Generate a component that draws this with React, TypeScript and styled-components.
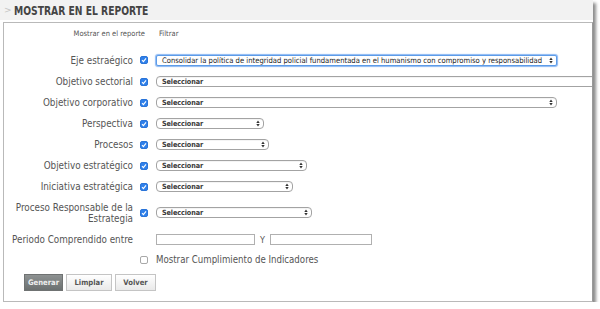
import styled, { createGlobalStyle } from 'styled-components';

const GlobalStyle = createGlobalStyle`
  html, body {
    margin: 0;
    padding: 0;
    background: #ffffff;
  }
  body {
    font-family: "DejaVu Sans Condensed", "DejaVu Sans", sans-serif;
    color: #555;
  }
`;

const Card = styled.div`
  width: 593px;
  height: 302px;
  box-shadow: 3px 3px 3px rgba(0, 0, 0, 0.45);
  background: #fff;
  display: flex;
  flex-direction: column;
  overflow: hidden;
`;

const Header = styled.div`
  height: 20px;
  background: #f2f2f2;
  display: flex;
  align-items: center;
  padding-left: 4px;
  gap: 2px;
  flex-shrink: 0;
`;

const Chevron = styled.span`
  color: #c4c4c4;
  font-family: "DejaVu Sans", sans-serif;
  font-size: 9px;
`;

const Title = styled.span`
  font-family: "DejaVu Sans Condensed", "DejaVu Sans", sans-serif;
  font-weight: bold;
  font-size: 12.5px;
  color: #444;
  display: inline-block;
  transform: scaleX(0.82);
  transform-origin: left center;
  white-space: nowrap;
`;

const Body = styled.div`
  flex: 1;
  margin: 2px 0 0 3px;
  border: 1px solid #b9b9b9;
  border-right-color: #999;
  overflow: hidden;
  display: flex;
  flex-direction: column;
`;

const Row = styled.div<{ $h?: number }>`
  display: flex;
  align-items: center;
  height: ${(p) => p.$h ?? 21}px;
  white-space: nowrap;
  flex-shrink: 0;
`;

const ColHeads = styled(Row)`
  height: 20px;
  font-size: 7.5px;
  color: #555;
  margin-bottom: 6px;
`;

const ColHeadShow = styled.span`
  width: 141px;
  text-align: right;
`;

const ColHeadFilter = styled.span`
  margin-left: 14px;
`;

const Label = styled.div`
  width: 129px;
  text-align: right;
  font-size: 9.8px;
  line-height: 11px;
  color: #555;
  flex-shrink: 0;
`;

const CheckSlot = styled.div`
  width: 8px;
  height: 8px;
  margin: 0 8px 0 7px;
  flex-shrink: 0;
  display: flex;
`;

const Box = styled.span<{ $on?: boolean }>`
  width: 8px;
  height: 8px;
  border-radius: 2px;
  box-sizing: border-box;
  background: ${(p) => (p.$on ? '#2f80ea' : '#fff')};
  border: 1px solid ${(p) => (p.$on ? '#2a74d8' : '#a8a8a8')};
  display: flex;
  align-items: center;
  justify-content: center;
`;

const SelectBox = styled.div<{ $w: number; $focus?: boolean }>`
  width: ${(p) => p.$w}px;
  height: 11px;
  box-sizing: border-box;
  border: 1px solid ${(p) => (p.$focus ? '#5d9ce8' : '#a3a3a3')};
  border-radius: ${(p) => (p.$focus ? '2px' : '4px')};
  box-shadow: ${(p) =>
    p.$focus ? '0 0 1px 1px rgba(110, 165, 240, 0.8)' : 'inset 0 1px 0 #f4f4f4'};
  background: #fff;
  display: flex;
  align-items: center;
  justify-content: space-between;
  padding: 0 3px 0 5px;
  flex-shrink: 0;
  color: #333;
  overflow: hidden;
`;

const SelectText = styled.span<{ $light?: boolean }>`
  font-size: ${(p) => (p.$light ? '7.6px' : '7.2px')};
  font-weight: ${(p) => (p.$light ? 'normal' : 'bold')};
  color: ${(p) => (p.$light ? '#222' : '#3a3a3a')};
  letter-spacing: ${(p) => (p.$light ? '0' : '-0.1px')};
`;

const TextInput = styled.div<{ $w: number }>`
  width: ${(p) => p.$w}px;
  height: 9px;
  border: 1px solid #b0b0b0;
  background: #fff;
  flex-shrink: 0;
`;

const AndSep = styled.span`
  font-size: 9px;
  color: #555;
  margin: 0 5px 0 5px;
`;

const PlainText = styled.span`
  font-size: 9.6px;
  color: #555;
`;

const Buttons = styled.div`
  display: flex;
  gap: 3px;
  padding-left: 20px;
  margin-top: 6px;
`;

const Button = styled.div<{ $primary?: boolean; $w: number }>`
  width: ${(p) => p.$w}px;
  height: 17px;
  box-sizing: border-box;
  display: flex;
  align-items: center;
  justify-content: center;
  font-size: 7.6px;
  font-weight: bold;
  border: 1px solid ${(p) => (p.$primary ? '#6f7272' : '#c4c4c4')};
  color: ${(p) => (p.$primary ? '#eeeeee' : '#555')};
  background: ${(p) =>
    p.$primary
      ? 'linear-gradient(#8e9292, #6b7070)'
      : 'linear-gradient(#ffffff, #e9e9e9)'};
`;

const Check = () => (
  <svg width="6" height="6" viewBox="0 0 6 6">
    <path d="M1 3.2 L2.4 4.6 L5 1.4" fill="none" stroke="#fff" strokeWidth="1.1" />
  </svg>
);

const Arrows = () => (
  <svg width="4" height="7" viewBox="0 0 4 7">
    <path d="M0.3 3 L2 0.6 L3.7 3 Z M0.3 4 L2 6.4 L3.7 4 Z" fill="#333" />
  </svg>
);

type Field = {
  label: string[];
  width: number;
  text?: string;
  focus?: boolean;
  arrows?: boolean;
  h?: number;
};

const fields: Field[] = [
  {
    label: ['Eje estraégico'],
    width: 401,
    focus: true,
    h: 22,
    text: 'Consolidar la política de integridad policial fundamentada en el humanismo con compromiso y responsabilidad',
  },
  { label: ['Objetivo sectorial'], width: 460, arrows: false },
  { label: ['Objetivo corporativo'], width: 401 },
  { label: ['Perspectiva'], width: 108 },
  { label: ['Procesos'], width: 113 },
  { label: ['Objetivo estratégico'], width: 151 },
  { label: ['Iniciativa estratégica'], width: 137 },
  { label: ['Proceso Responsable de la', 'Estrategia'], width: 156, h: 31 },
];

const App = () => (
  <>
    <GlobalStyle />
    <Card>
      <Header>
        <Chevron>&gt;</Chevron>
        <Title>MOSTRAR EN EL REPORTE</Title>
      </Header>
      <Body>
        <ColHeads>
          <ColHeadShow>Mostrar en el reporte</ColHeadShow>
          <ColHeadFilter>Filtrar</ColHeadFilter>
        </ColHeads>
        {fields.map((f) => (
          <Row key={f.label.join(' ')} $h={f.h}>
            <Label>
              {f.label.map((l) => (
                <div key={l}>{l}</div>
              ))}
            </Label>
            <CheckSlot>
              <Box $on>
                <Check />
              </Box>
            </CheckSlot>
            <SelectBox $w={f.width} $focus={f.focus}>
              <SelectText $light={!!f.text}>{f.text ?? 'Seleccionar'}</SelectText>
              {f.arrows !== false && <Arrows />}
            </SelectBox>
          </Row>
        ))}
        <Row $h={23}>
          <Label>Periodo Comprendido entre</Label>
          <CheckSlot />
          <TextInput $w={97} />
          <AndSep>Y</AndSep>
          <TextInput $w={100} />
        </Row>
        <Row $h={17}>
          <Label />
          <CheckSlot>
            <Box />
          </CheckSlot>
          <PlainText>Mostrar Cumplimiento de Indicadores</PlainText>
        </Row>
        <Buttons>
          <Button $primary $w={39}>Generar</Button>
          <Button $w={46}>Limplar</Button>
          <Button $w={41}>Volver</Button>
        </Buttons>
      </Body>
    </Card>
  </>
);

export default App;
